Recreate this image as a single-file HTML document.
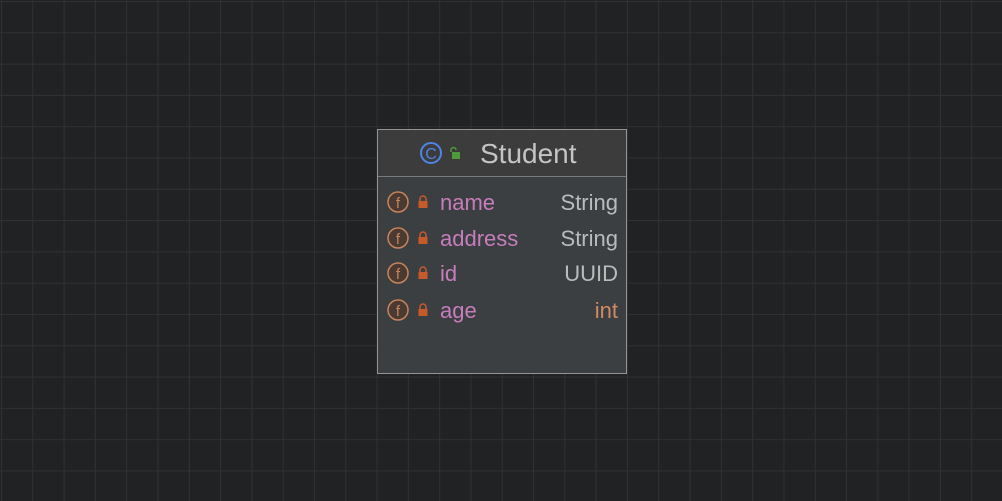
<!DOCTYPE html>
<html><head><style>
body{margin:0;width:1002px;height:501px;overflow:hidden;background-color:#212224;
background-image:linear-gradient(to right,#303133 1px,transparent 1px),linear-gradient(to bottom,#303133 1px,transparent 1px);
background-size:31.3px 31.3px;background-position:1px 1px;font-family:"Liberation Sans",sans-serif;position:relative}
.box{position:absolute;left:377px;top:129px;width:248px;height:243px;border:1px solid #959595;background:#3b3f42}
.hdr{height:46px;background:#3c3c3c;border-bottom:1px solid #7a7a7a;position:relative}
.t{position:absolute;left:102px;top:8px;font-size:28px;color:#c4c4c4}
.row{position:absolute;left:0;width:248px;height:30px}
.n{position:absolute;left:62px;top:2px;font-size:22px;color:#c77dbb}
.ty{position:absolute;right:8px;top:2px;font-size:22px;color:#bbbbbb}
svg{position:absolute}
</style></head><body>
<div class="box">
 <div class="hdr">
  <svg style="left:41px;top:11px" width="24" height="24"><circle cx="12" cy="12" r="10" fill="none" stroke="#4d84e6" stroke-width="2"/><text x="12" y="18" font-size="16" fill="#4d84e6" text-anchor="middle" font-family="Liberation Sans">C</text></svg>
  <svg style="left:70px;top:16px" width="14" height="14"><path d="M3 6V4a2.5 2.5 0 0 1 5 0" fill="none" stroke="#4e9a3a" stroke-width="1.5"/><rect x="4" y="6" width="8" height="7" fill="#4e9a3a"/></svg>
  <div class="t">Student</div>
 </div>
 <div class="row" style="top:58px"><svg style="left:9px;top:3px" width="24" height="24"><circle cx="11" cy="11" r="10" fill="#4a3a32" stroke="#c7845a" stroke-width="1.5"/><text x="11" y="17" font-size="15" fill="#c7845a" text-anchor="middle" font-family="Liberation Sans">f</text></svg><svg style="left:39px;top:7px" width="12" height="14"><path d="M3 6V4a3 3 0 0 1 6 0v2" fill="none" stroke="#c75a2a" stroke-width="1.5"/><rect x="1.5" y="6" width="9" height="7" fill="#c75a2a"/></svg><div class="n">name</div><div class="ty">String</div></div>
 <div class="row" style="top:94px"><svg style="left:9px;top:3px" width="24" height="24"><circle cx="11" cy="11" r="10" fill="#4a3a32" stroke="#c7845a" stroke-width="1.5"/><text x="11" y="17" font-size="15" fill="#c7845a" text-anchor="middle" font-family="Liberation Sans">f</text></svg><svg style="left:39px;top:7px" width="12" height="14"><path d="M3 6V4a3 3 0 0 1 6 0v2" fill="none" stroke="#c75a2a" stroke-width="1.5"/><rect x="1.5" y="6" width="9" height="7" fill="#c75a2a"/></svg><div class="n">address</div><div class="ty">String</div></div>
 <div class="row" style="top:129px"><svg style="left:9px;top:3px" width="24" height="24"><circle cx="11" cy="11" r="10" fill="#4a3a32" stroke="#c7845a" stroke-width="1.5"/><text x="11" y="17" font-size="15" fill="#c7845a" text-anchor="middle" font-family="Liberation Sans">f</text></svg><svg style="left:39px;top:7px" width="12" height="14"><path d="M3 6V4a3 3 0 0 1 6 0v2" fill="none" stroke="#c75a2a" stroke-width="1.5"/><rect x="1.5" y="6" width="9" height="7" fill="#c75a2a"/></svg><div class="n">id</div><div class="ty">UUID</div></div>
 <div class="row" style="top:166px"><svg style="left:9px;top:3px" width="24" height="24"><circle cx="11" cy="11" r="10" fill="#4a3a32" stroke="#c7845a" stroke-width="1.5"/><text x="11" y="17" font-size="15" fill="#c7845a" text-anchor="middle" font-family="Liberation Sans">f</text></svg><svg style="left:39px;top:7px" width="12" height="14"><path d="M3 6V4a3 3 0 0 1 6 0v2" fill="none" stroke="#c75a2a" stroke-width="1.5"/><rect x="1.5" y="6" width="9" height="7" fill="#c75a2a"/></svg><div class="n">age</div><div class="ty" style="color:#d08a62">int</div></div>
</div>
</body></html>
